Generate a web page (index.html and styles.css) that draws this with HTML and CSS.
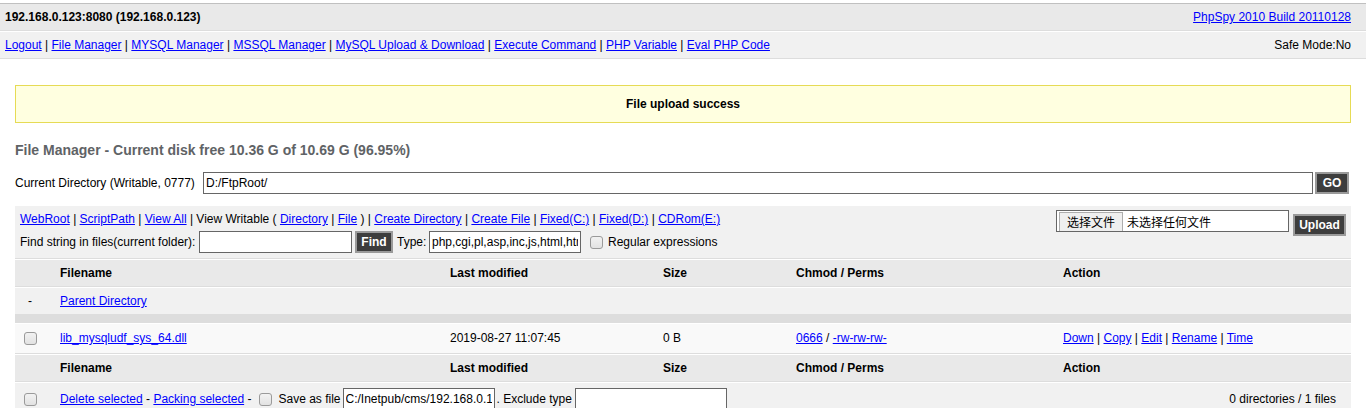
FILE: index.html
```html
<!DOCTYPE html>
<html>
<head>
<meta charset="utf-8">
<title>PhpSpy</title>
<link rel="stylesheet" href="styles.css">
</head>
<body>
<div class="top">
  <div class="bar headbar">
    <span class="host">192.168.0.123:8080 (192.168.0.123)</span>
    <a href="#">PhpSpy 2010 Build 20110128</a>
  </div>
  <div class="bar navbar">
    <span><a href="#">Logout</a> | <a href="#">File Manager</a> | <a href="#">MYSQL Manager</a> | <a href="#">MSSQL Manager</a> | <a href="#">MySQL Upload &amp; Download</a> | <a href="#">Execute Command</a> | <a href="#">PHP Variable</a> | <a href="#">Eval PHP Code</a></span>
    <span>Safe Mode:No</span>
  </div>
</div>
<div class="main">
  <div class="msg">File upload success</div>
  <h2>File Manager - Current disk free 10.36 G of 10.69 G (96.95%)</h2>
  <div class="dirrow">
    <span class="dirlbl">Current Directory (Writable, 0777)</span>
    <input class="input dir" value="D:/FtpRoot/">
    <button class="bt go">GO</button>
  </div>
  <div class="toolbar">
    <div class="tools">
      <div class="links"><a href="#">WebRoot</a> | <a href="#">ScriptPath</a> | <a href="#">View All</a> | View Writable ( <a href="#">Directory</a> | <a href="#">File</a> ) | <a href="#">Create Directory</a> | <a href="#">Create File</a> | <a href="#">Fixed(C:)</a> | <a href="#">Fixed(D:)</a> | <a href="#">CDRom(E:)</a></div>
      <div class="find">
        <span class="findlbl">Find string in files(current folder):</span>
        <input class="input findin">
        <button class="bt findbt">Find</button>
        <span class="typelbl">Type:</span>
        <input class="input typein" value="php,cgi,pl,asp,inc,js,html,htm,jsp">
        <input type="checkbox" class="cb regcb">
        <span class="reglbl">Regular expressions</span>
      </div>
    </div>
    <div class="upload">
      <div class="filebox"><span class="filebtn">选择文件</span><span class="filetxt">未选择任何文件</span></div>
      <button class="bt upbt">Upload</button>
    </div>
  </div>
  <div class="ftable">
    <div class="row head">
      <div class="c1"></div><div>Filename</div><div>Last modified</div><div>Size</div><div>Chmod / Perms</div><div>Action</div>
    </div>
    <div class="row alt1">
      <div class="c1">-</div><div><a href="#">Parent Directory</a></div><div></div><div></div><div></div><div></div>
    </div>
    <div class="divider"></div>
    <div class="row alt2 filerow">
      <div class="c1"><input type="checkbox" class="cb"></div>
      <div><a href="#">lib_mysqludf_sys_64.dll</a></div>
      <div>2019-08-27 11:07:45</div>
      <div>0 B</div>
      <div><a href="#">0666</a> / <a href="#">-rw-rw-rw-</a></div>
      <div><a href="#">Down</a> | <a href="#">Copy</a> | <a href="#">Edit</a> | <a href="#">Rename</a> | <a href="#">Time</a></div>
    </div>
    <div class="row head">
      <div class="c1"></div><div>Filename</div><div>Last modified</div><div>Size</div><div>Chmod / Perms</div><div>Action</div>
    </div>
    <div class="row alt1 footrow">
      <div class="c1"><input type="checkbox" class="cb"></div>
      <div class="footcell">
        <div class="footleft">
          <span><a href="#">Delete selected</a> - <a href="#">Packing selected</a> -</span>
          <input type="checkbox" class="cb savecb">
          <span class="savelbl">Save as file</span>
          <input class="input savein" value="C:/Inetpub/cms/192.168.0.123.tar.gz">
          <span class="excllbl">. Exclude type</span>
          <input class="input exclin">
        </div>
        <div class="footright">0 directories / 1 files</div>
      </div>
    </div>
  </div>
</div>
</body>
</html>
```
FILE: styles.css
```css
html, body {
  margin: 0;
  padding: 0;
  background: #fff;
}
body {
  font: 12px/16px "Liberation Sans", Arial, sans-serif;
  color: #000;
}
a {
  color: #00f;
  text-decoration: underline;
}
.top {
  margin-top: 3px;
  border-top: 1px solid #c0c0c0;
}
.bar {
  display: flex;
  justify-content: space-between;
  padding: 5px 15px 5px 5px;
  border-bottom: 1px solid #ddd;
}
.headbar {
  background: #e9e9e9;
}
.host {
  font-weight: bold;
}
.navbar {
  background: #f1f1f1;
  border-top: 1px solid #fff;
}
.main {
  padding: 15px;
}
.msg {
  margin-top: 11px;
  border: 1px solid #e6db55;
  background: #ffffe0;
  padding: 10px;
  text-align: center;
  font-weight: bold;
}
h2 {
  margin: 15px 0 0;
  padding: 0;
  height: 24px;
  line-height: 24px;
  font-size: 14px;
  color: #5f6366;
}
.input {
  box-sizing: border-box;
  height: 22px;
  border: 1px solid #666;
  padding: 2px;
  font: 12px "Liberation Sans", Arial, sans-serif;
  background: #fff;
  color: #000;
  margin: 0;
  outline: none;
}
.bt {
  box-sizing: border-box;
  height: 22px;
  background: #3d3d3d;
  color: #fff;
  border: 2px solid #9a9a9a;
  font: bold 12px "Liberation Sans", Arial, sans-serif;
  padding: 0;
  margin: 0;
}
.dirrow {
  display: flex;
  align-items: center;
  margin-top: 10px;
}
.dirlbl {
  width: 188px;
  flex: none;
}
.dir {
  flex: 1;
}
.go {
  width: 34px;
  margin-left: 2px;
  margin-right: 2px;
}
.toolbar {
  margin-top: 11px;
  background: #f1f1f1;
  border-top: 1px solid #fff;
  border-bottom: 1px solid #ddd;
  padding: 5px;
  display: flex;
  justify-content: space-between;
  align-items: flex-start;
}
.find {
  margin-top: 4px;
  display: flex;
  align-items: center;
}
.findlbl {
  width: 179px;
}
.findin {
  width: 153px;
}
.findbt {
  width: 38px;
  margin-left: 3px;
}
.typelbl {
  margin-left: 4px;
  width: 32px;
}
.typein {
  width: 152px;
}
.cb {
  -webkit-appearance: none;
  appearance: none;
  box-sizing: border-box;
  width: 13px;
  height: 13px;
  margin: 0;
  border: 1px solid #9a9a9a;
  border-radius: 3px;
  background: linear-gradient(#f2f2f2, #e2e2e2);
  vertical-align: middle;
}
.regcb {
  margin-left: 9px;
}
.reglbl {
  margin-left: 5px;
}
.upload {
  display: flex;
  align-items: flex-start;
  margin-top: -1px;
}
.filebox {
  box-sizing: border-box;
  width: 233px;
  height: 22px;
  border: 1px solid #666;
  background: #fff;
  padding: 2px 0 0 2px;
  display: flex;
  align-items: flex-end;
  font-family: "Liberation Sans", "Noto Sans CJK SC", sans-serif;
}
.filebtn {
  box-sizing: border-box;
  height: 19px;
  line-height: 16px;
  padding: 2px 7px 0;
  border: 1px solid #adadad;
  border-bottom: none;
  background: #efefef;
  font-size: 12px;
}
.filetxt {
  margin-left: 4px;
  height: 19px;
  box-sizing: border-box;
  padding-top: 3px;
  line-height: 16px;
  font-size: 12px;
}
.upbt {
  width: 53px;
  margin-left: 4px;
  margin-top: 4px;
}
.ftable {
  display: flex;
  flex-direction: column;
}
.row {
  display: grid;
  grid-template-columns: 40px 390px 213px 133px 267px 1fr;
  border-top: 1px solid #fff;
  border-bottom: 1px solid #ddd;
}
.row > div {
  padding: 5px 15px 5px 5px;
}
.head {
  background: #e9e9e9;
  font-weight: bold;
}
.alt1 {
  background: #f1f1f1;
}
.alt2 {
  background: #f9f9f9;
}
.row > .c1 {
  display: flex;
  align-items: center;
  justify-content: center;
}
.filerow > div {
  padding-top: 6px;
  padding-bottom: 7px;
}
.divider {
  height: 8px;
  background: #ddd;
}
.row > .footcell {
  grid-column: 2 / -1;
  display: flex;
  justify-content: space-between;
  align-items: center;
}
.footleft {
  display: flex;
  align-items: center;
}
.savecb {
  margin-left: 8px;
}
.savelbl {
  margin-left: 6px;
}
.savein {
  width: 152px;
  margin-left: 2px;
}
.excllbl {
  margin-left: 2px;
}
.exclin {
  width: 152px;
  margin-left: 3px;
}
```
